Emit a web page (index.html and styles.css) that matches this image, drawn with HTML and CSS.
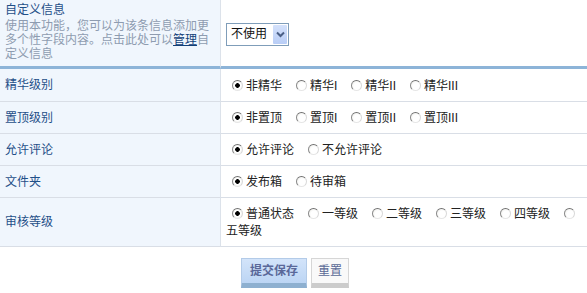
FILE: index.html
```html
<!DOCTYPE html>
<html lang="zh-CN">
<head>
<meta charset="utf-8">
<title>信息设置</title>
<link rel="stylesheet" href="styles.css">
</head>
<body>
<form class="form">
<table class="grid">
<tr class="row row-custom">
<th class="label-cell">
<div class="title">自定义信息</div>
<div class="desc"><span class="line">使用本功能，您可以为该条信息添加更</span><span class="line">多个性字段内容。点击此处可以<a class="link" href="#">管理</a>自</span><span class="line">定义信息</span></div>
</th>
<td class="field-cell">
<div class="select"><span class="select-text">不使用</span><span class="select-btn"><svg width="9" height="7" viewBox="0 0 9 7"><path d="M1 1.5 L4.5 5 L8 1.5" fill="none" stroke="#4a5f86" stroke-width="2"/></svg></span></div>
</td>
</tr>
<tr class="row row-a">
<th class="label-cell">精华级别</th>
<td class="field-cell"><label class="opt"><input class="radio" type="radio" name="good" checked><span class="txt">非精华</span></label><label class="opt"><input class="radio" type="radio" name="good"><span class="txt">精华I</span></label><label class="opt"><input class="radio" type="radio" name="good"><span class="txt">精华II</span></label><label class="opt"><input class="radio" type="radio" name="good"><span class="txt">精华III</span></label></td>
</tr>
<tr class="row row-b">
<th class="label-cell">置顶级别</th>
<td class="field-cell"><label class="opt"><input class="radio" type="radio" name="top" checked><span class="txt">非置顶</span></label><label class="opt"><input class="radio" type="radio" name="top"><span class="txt">置顶I</span></label><label class="opt"><input class="radio" type="radio" name="top"><span class="txt">置顶II</span></label><label class="opt"><input class="radio" type="radio" name="top"><span class="txt">置顶III</span></label></td>
</tr>
<tr class="row row-b">
<th class="label-cell">允许评论</th>
<td class="field-cell"><label class="opt"><input class="radio" type="radio" name="cmt" checked><span class="txt">允许评论</span></label><label class="opt"><input class="radio" type="radio" name="cmt"><span class="txt">不允许评论</span></label></td>
</tr>
<tr class="row row-b">
<th class="label-cell">文件夹</th>
<td class="field-cell"><label class="opt"><input class="radio" type="radio" name="box" checked><span class="txt">发布箱</span></label><label class="opt"><input class="radio" type="radio" name="box"><span class="txt">待审箱</span></label></td>
</tr>
<tr class="row row-tall">
<th class="label-cell">审核等级</th>
<td class="field-cell"><label class="opt"><input class="radio" type="radio" name="lv" checked><span class="txt">普通状态</span></label><label class="opt"><input class="radio" type="radio" name="lv"><span class="txt">一等级</span></label><label class="opt"><input class="radio" type="radio" name="lv"><span class="txt">二等级</span></label><label class="opt"><input class="radio" type="radio" name="lv"><span class="txt">三等级</span></label><label class="opt"><input class="radio" type="radio" name="lv"><span class="txt">四等级</span></label><label class="opt"><input class="radio" type="radio" name="lv"><span class="txt">五等级</span></label></td>
</tr>
</table>
<div class="actions">
<button class="btn btn-primary" type="button">提交保存</button>
<button class="btn btn-plain" type="button">重置</button>
</div>
</form>
</body>
</html>
```

FILE: styles.css
```css
html, body {
  margin: 0;
  padding: 0;
  background: #ffffff;
}
body {
  font-family: "Liberation Sans", "Noto Sans CJK SC", sans-serif;
  font-size: 12px;
  color: #222;
}
.form {
  margin: 0;
}
.grid {
  width: 100%;
  border-collapse: separate;
  border-spacing: 0;
  table-layout: fixed;
}
.grid th,
.grid td {
  box-sizing: border-box;
  vertical-align: middle;
  border-bottom: 1px solid #d9dee6;
}
.label-cell {
  width: 221px;
  padding: 0 7px 0 5px;
  background: #f0f6fd;
  border-right: 1px solid #dce2ea;
  text-align: left;
  font-weight: normal;
  color: #1f4f88;
  line-height: 16px;
}
.field-cell {
  padding: 2px 6px 0 5px;
  line-height: 17px;
  color: #222;
}
.row { height: 32px; }
.row-a { height: 33px; }
.row-tall { height: 49px; }
.row-custom { height: 69px; }
.row-custom th,
.row-custom td {
  border-bottom: 3px solid #8db4d8;
  vertical-align: middle;
}
.row-custom .label-cell {
  vertical-align: top;
  padding-top: 3px;
}
.title {
  color: #1f4f88;
  line-height: 15px;
}
.desc {
  color: #8e9cb0;
  line-height: 14px;
  margin-top: 1px;
}
.line {
  display: block;
  white-space: nowrap;
}
.link {
  color: #123f78;
  text-decoration: underline;
}
.select {
  display: inline-flex;
  align-items: center;
  box-sizing: border-box;
  width: 63px;
  height: 23px;
  border: 1px solid #7f9db9;
  background: #fff;
  vertical-align: middle;
}
.select-text {
  flex: 1;
  padding-left: 4px;
  color: #111;
  line-height: 21px;
}
.select-btn {
  width: 14px;
  height: 19px;
  margin-right: 1px;
  display: flex;
  align-items: center;
  justify-content: center;
  background: linear-gradient(#d4e1fb, #b8cdf6);
  border-radius: 1px;
}
.opt {
  margin-right: 8px;
  white-space: normal;
}
.radio {
  -webkit-appearance: none;
  appearance: none;
  box-sizing: border-box;
  width: 11px;
  height: 11px;
  margin: 0 3px 0 6px;
  border-radius: 50%;
  border: 1px solid;
  border-color: #707070 #d8d8d8 #e6e6e6 #8a8a8a;
  background: radial-gradient(circle at 60% 60%, #ffffff 0 45%, #e9e9e4 100%);
  vertical-align: -1px;
}
.radio:checked {
  background: radial-gradient(circle at 50% 50%, #000 0 2px, #ffffff 2.6px 45%, #e9e9e4 100%);
}
.txt {
  white-space: nowrap;
}
.actions {
  display: flex;
  justify-content: center;
  gap: 4px;
  padding-left: 3px;
  margin-top: 11px;
}
.btn {
  box-sizing: border-box;
  height: 30px;
  margin: 0;
  font-family: "Liberation Sans", "Noto Sans CJK SC", sans-serif;
  font-size: 12px;
  line-height: 24px;
  padding: 0;
  cursor: pointer;
}
.btn-primary {
  width: 66px;
  background: linear-gradient(#d3e4fa, #bcd5f4);
  border: 1px solid #b3cbe8;
  border-bottom: 5px solid #8eb0d0;
  color: #5a6899;
  font-weight: bold;
}
.btn-plain {
  width: 38px;
  background: #f9f9f9;
  border: 1px solid #d6d6d6;
  border-bottom: 5px solid #cccccc;
  color: #5a6a96;
}
```
